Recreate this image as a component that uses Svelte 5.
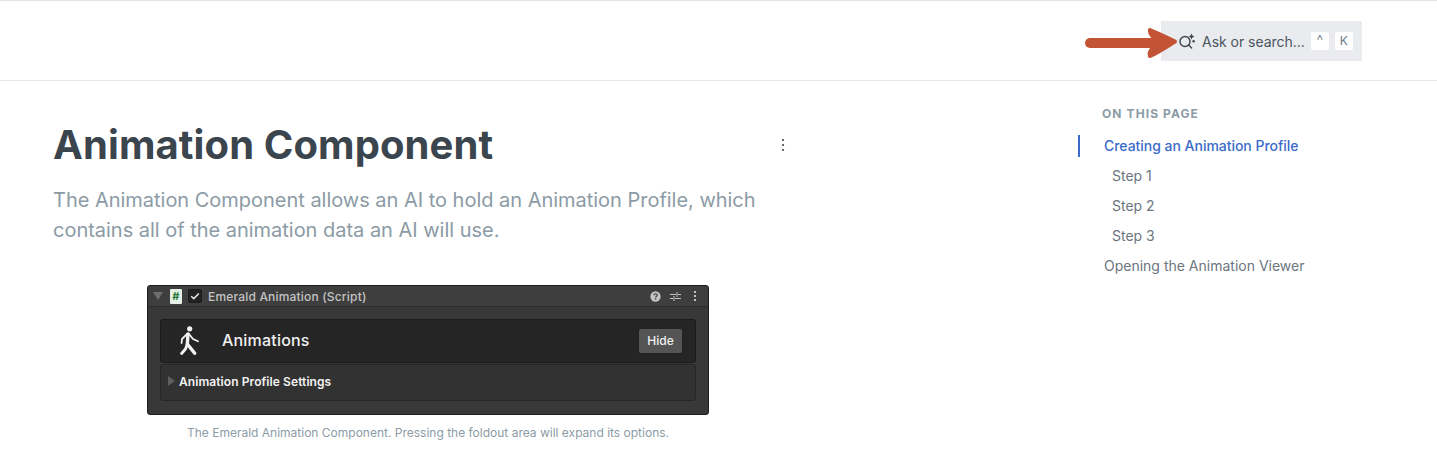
<script lang="ts">
  const toc = [
    { label: "Creating an Animation Profile", active: true },
    { label: "Step 1", sub: true },
    { label: "Step 2", sub: true },
    { label: "Step 3", sub: true },
    { label: "Opening the Animation Viewer" },
  ];
</script>

<div class="page">
  <header class="topbar">
    <div class="search">
      <svg class="search-icon" width="18" height="18" viewBox="0 0 18 18" fill="none">
        <circle cx="7" cy="9.5" r="5" stroke="#3d4650" stroke-width="1.4" />
        <path d="M10.6 13.1 L13.6 16" stroke="#3d4650" stroke-width="1.4" stroke-linecap="round" />
        <path d="M13.5 1.5 L14.4 3.6 L16.5 4.5 L14.4 5.4 L13.5 7.5 L12.6 5.4 L10.5 4.5 L12.6 3.6 Z" fill="#3d4650" />
        <circle cx="15.6" cy="9.2" r="1.2" fill="#3d4650" />
      </svg>
      <span class="search-text">Ask or search...</span>
      <kbd class="key-ctrl">^</kbd>
      <kbd>K</kbd>
    </div>
    <svg class="arrow" width="94" height="36" viewBox="0 0 94 36" fill="none">
      <path d="M5 18 H68" stroke="#c25335" stroke-width="10" stroke-linecap="round" />
      <path d="M65 5 C70 7 81 12 90 16.5 C81 22 72 28 65 31 C63 27 67 24 69 22 L69 13 C67 11 64 8 65 5 Z" fill="#c25335" stroke="#c25335" stroke-width="4" stroke-linejoin="round" />
    </svg>
  </header>

  <main class="body">
    <article class="content">
      <div class="title-row">
        <h1>Animation Component</h1>
        <svg class="more" width="4" height="14" viewBox="0 0 4 14" fill="#3d4650">
          <circle cx="2" cy="2" r="1.1" />
          <circle cx="2" cy="7" r="1.1" />
          <circle cx="2" cy="12" r="1.1" />
        </svg>
      </div>
      <p class="lead">The Animation Component allows an AI to hold an Animation Profile, which contains all of the animation data an AI will use.</p>

      <figure>
        <div class="inspector">
          <div class="ins-head">
            <span class="fold-down"></span>
            <span class="script-icon">#</span>
            <span class="check">
              <svg width="10" height="8" viewBox="0 0 10 8" fill="none">
                <path d="M1.2 4.2 L3.8 6.6 L8.8 1.4" stroke="#e8e8e8" stroke-width="1.5" />
              </svg>
            </span>
            <span class="ins-title">Emerald Animation (Script)</span>
            <span class="ins-tools">
              <svg width="11" height="11" viewBox="0 0 12 12">
                <circle cx="6" cy="6" r="5.6" fill="#c4c4c4" />
                <path d="M4.2 4.8 C4.3 3.4 5.2 3 6 3 C7.1 3 7.9 3.7 7.9 4.6 C7.9 5.7 6.1 5.8 6.1 7.2" stroke="#3c3c3c" stroke-width="1.3" fill="none" />
                <rect x="5.4" y="8" width="1.4" height="1.4" fill="#3c3c3c" />
              </svg>
              <svg width="11" height="11" viewBox="0 0 11 11" fill="none" stroke="#c4c4c4" stroke-width="1">
                <path d="M0 3.5 H6 M8 3.5 H11 M7 1 V6 M0 7.5 H3 M5 7.5 H11 M4 5 V10" />
              </svg>
              <svg class="ins-dots" width="4" height="12" viewBox="0 0 4 12" fill="#c4c4c4">
                <rect x="1" y="1" width="2" height="2" />
                <rect x="1" y="5" width="2" height="2" />
                <rect x="1" y="9" width="2" height="2" />
              </svg>
            </span>
          </div>
          <div class="ins-body">
            <div class="panel-dark">
              <svg class="walker" width="20" height="30" viewBox="0 0 20 30" fill="none" stroke="#f2f2f2" stroke-linecap="round" stroke-linejoin="round">
                <circle cx="9.7" cy="2.8" r="2.6" fill="#f2f2f2" stroke="none" />
                <path d="M8 8 L7.3 18 L14.7 27.3" stroke-width="3.4" />
                <path d="M7.3 18 L5.5 23 L1.6 27.5" stroke-width="2.8" />
                <path d="M7 8 L2 13 L1.6 17" stroke-width="1.8" />
                <path d="M9 8 L13 13 L18 15.3" stroke-width="1.8" />
              </svg>
              <span class="panel-title">Animations</span>
              <span class="hide-btn">Hide</span>
            </div>
            <div class="panel-light">
              <span class="fold-right"></span>
              <span>Animation Profile Settings</span>
            </div>
          </div>
        </div>
        <figcaption>The Emerald Animation Component. Pressing the foldout area will expand its options.</figcaption>
      </figure>
    </article>

    <aside class="toc">
      <div class="toc-title">ON THIS PAGE</div>
      <ul>
        {#each toc as item}
          <li class:active={item.active} class:sub={item.sub}>{item.label}</li>
        {/each}
      </ul>
    </aside>
  </main>
</div>

<style>
  :global(body) {
    margin: 0;
    background: #fff;
    font-family: Inter, "Liberation Sans", sans-serif;
  }

  .page {
    height: 461px;
    overflow: hidden;
    border-top: 1px solid #e2e4e6;
    box-sizing: border-box;
  }

  /* top bar */
  .topbar {
    position: relative;
    height: 80px;
    box-sizing: border-box;
    border-bottom: 1px solid #e6e8ea;
    display: flex;
    justify-content: flex-end;
    align-items: flex-start;
    padding: 20px 75px 0 0;
  }

  .search {
    width: 201px;
    height: 40px;
    box-sizing: border-box;
    background: #e9ebee;
    display: flex;
    align-items: center;
    padding: 0 10px 0 17px;
    color: #4a5560;
    font-size: 14px;
  }

  .search-icon {
    flex: none;
    margin-right: 6px;
  }

  .search-text {
    flex: 1;
    white-space: nowrap;
    letter-spacing: -0.03px;
  }

  kbd {
    flex: none;
    width: 18px;
    height: 18px;
    margin-left: 6px;
    background: #fff;
    border-radius: 2px;
    font-family: inherit;
    font-size: 12px;
    line-height: 18px;
    text-align: center;
    color: #6b7a86;
  }

  .key-ctrl {
    font-size: 15px;
    font-weight: 300;
  }

  .arrow {
    position: absolute;
    left: 1085px;
    top: 24px;
  }

  /* main columns */
  .body {
    display: flex;
    height: 380px;
  }

  .content {
    width: 737px;
    margin-left: 53px;
    flex: none;
  }

  .title-row {
    display: flex;
    justify-content: space-between;
    align-items: center;
    margin-top: 41px;
    height: 46px;
  }

  h1 {
    margin: 0;
    font-size: 40px;
    font-weight: 700;
    line-height: 46px;
    color: #3b454e;
    letter-spacing: 0.1px;
  }

  .more {
    margin-right: 5px;
  }

  .lead {
    width: 720px;
    margin: 17px 0 0;
    font-size: 20px;
    line-height: 30px;
    color: #8c9ba5;
    letter-spacing: -0.02px;
  }

  figure {
    width: 562px;
    margin: 40px 0 0 94px;
  }

  /* unity inspector mock */
  .inspector {
    height: 130px;
    box-sizing: border-box;
    background: #383838;
    border: 1px solid #1c1c1c;
    border-radius: 3px;
    overflow: hidden;
  }

  .ins-head {
    height: 20px;
    background: #3e3e3e;
    border-bottom: 1px solid #2d2d2d;
    display: flex;
    align-items: center;
    padding: 0 11px 0 5px;
    color: #c4c4c4;
    font-size: 12px;
    font-weight: 500;
    letter-spacing: 0.18px;
  }

  .fold-down {
    width: 0;
    height: 0;
    border-left: 5px solid transparent;
    border-right: 5px solid transparent;
    border-top: 8px solid #6e6e6e;
    margin-right: 7px;
  }

  .script-icon {
    width: 12px;
    height: 15px;
    background: #e6efe6;
    border-radius: 1px;
    color: #1f7a3a;
    font-size: 11px;
    font-weight: 700;
    line-height: 15px;
    text-align: center;
    margin-right: 6px;
  }

  .check {
    width: 14px;
    height: 14px;
    background: #232323;
    border: 1px solid #191919;
    border-radius: 2px;
    box-sizing: border-box;
    display: flex;
    align-items: center;
    justify-content: center;
    margin-right: 6px;
  }

  .ins-title {
    flex: 1;
    white-space: nowrap;
  }

  .ins-tools {
    display: flex;
    align-items: center;
    gap: 9px;
  }

  .ins-dots {
    margin-left: 3px;
  }

  .ins-body {
    padding: 12px 12px 0;
  }

  .panel-dark {
    height: 44px;
    box-sizing: border-box;
    background: #252525;
    border: 1px solid #1b1b1b;
    border-radius: 3px;
    display: flex;
    align-items: center;
    padding: 0 13px 0 19px;
    color: #f0f0f0;
  }

  .walker {
    flex: none;
  }

  .panel-title {
    flex: 1;
    margin-left: 22px;
    font-size: 16px;
    font-weight: 500;
    letter-spacing: 0.2px;
    margin-top: -2px;
  }

  .hide-btn {
    width: 43px;
    height: 24px;
    background: #555;
    border-radius: 2px;
    font-size: 12px;
    font-weight: 500;
    line-height: 24px;
    text-align: center;
  }

  .panel-light {
    height: 37px;
    margin-top: 1px;
    box-sizing: border-box;
    background: #323232;
    border: 1px solid #262626;
    border-radius: 3px;
    display: flex;
    align-items: center;
    padding: 0 0 3px 7px;
    color: #f2f2f2;
    font-size: 12px;
    font-weight: 600;
    letter-spacing: 0.08px;
  }

  .fold-right {
    width: 0;
    height: 0;
    border-top: 5px solid transparent;
    border-bottom: 5px solid transparent;
    border-left: 7px solid #5e5e5e;
    margin-right: 4px;
  }

  figcaption {
    margin-top: 10px;
    font-size: 12px;
    line-height: 15px;
    text-align: center;
    color: #8c9ba5;
  }

  /* on this page */
  .toc {
    margin-left: 288px;
    padding-top: 26px;
    width: 260px;
    flex: none;
  }

  .toc-title {
    margin-left: 24px;
    font-size: 12px;
    font-weight: 700;
    letter-spacing: 1.1px;
    line-height: 14px;
    color: #8c9ba5;
  }

  ul {
    list-style: none;
    margin: 10px 0 0;
    padding: 0;
  }

  li {
    height: 30px;
    line-height: 30px;
    padding-left: 26px;
    font-size: 14px;
    color: #6b7680;
    white-space: nowrap;
  }

  li.sub {
    padding-left: 34px;
  }

  li.active {
    color: #3b6bc9;
    font-weight: 500;
    position: relative;
    letter-spacing: -0.03px;
  }

  li.active::before {
    content: "";
    position: absolute;
    left: 0;
    top: 4px;
    width: 2px;
    height: 22px;
    background: #3b6bc9;
  }
</style>
